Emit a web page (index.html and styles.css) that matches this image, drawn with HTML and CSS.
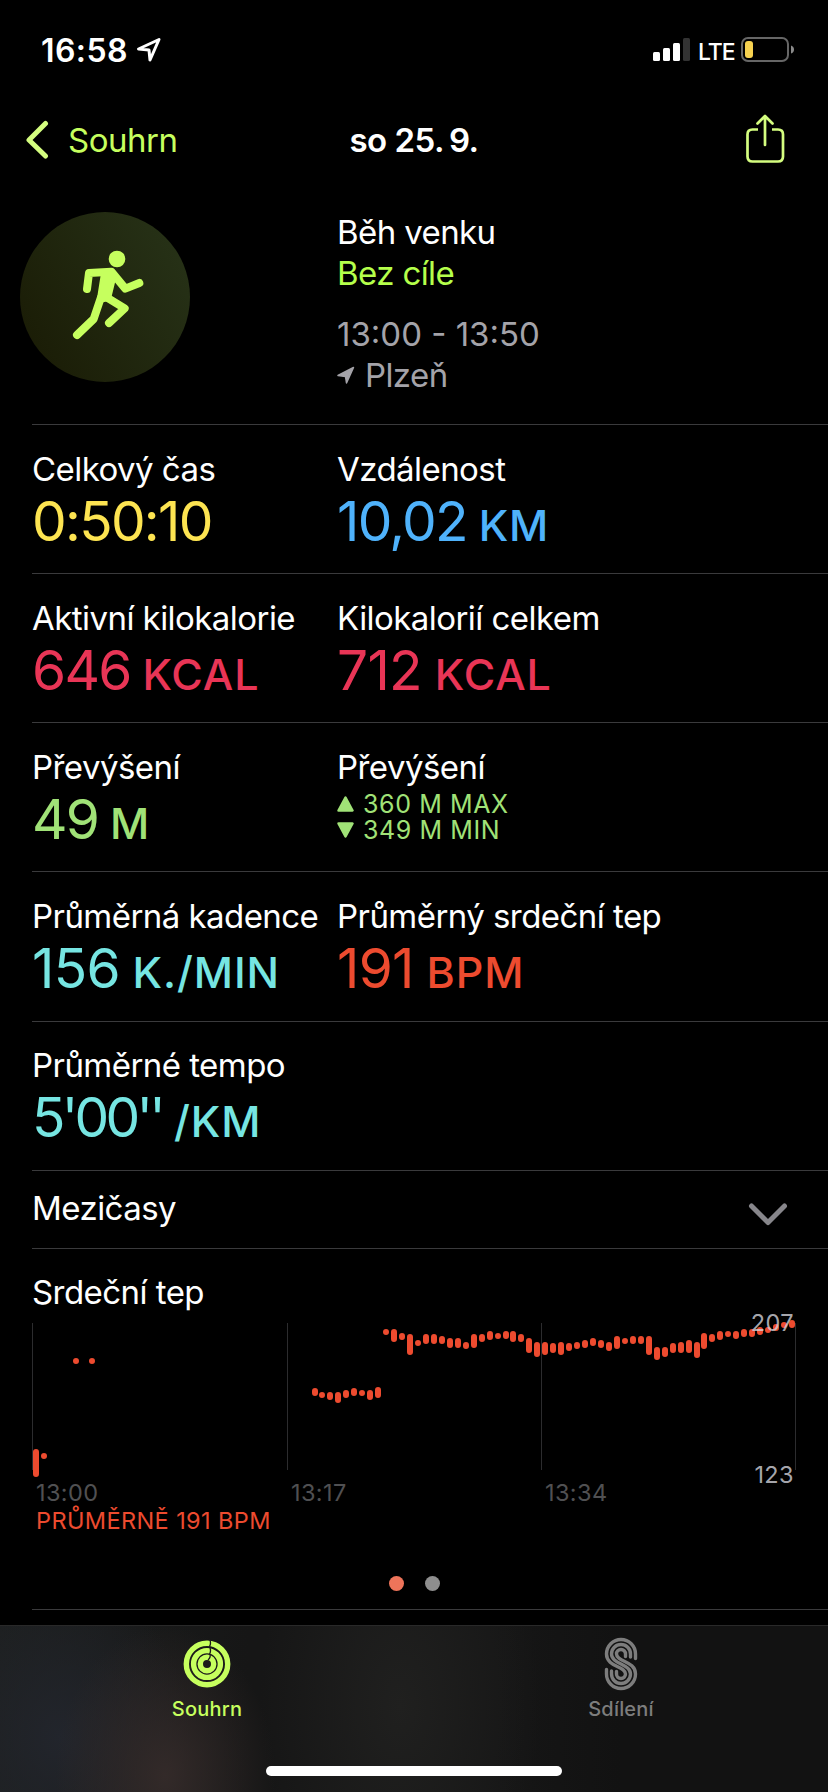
FILE: index.html
```
<!DOCTYPE html>
<html lang="cs">
	<head>
		<meta charset="UTF-8">
		<title>Souhrn</title>
		<link rel="stylesheet" href="styles.css">
	</head>
	<body>
		<div id="app">
			<header class="status">
				<span class="clock">16:58</span>
				<svg class="loc" width="26" height="26" viewBox="0 0 26 26"><path d="M2.5 12 23 2.5 14 23 13 13Z" fill="none" stroke="#fff" stroke-width="3" stroke-linejoin="round"/></svg>
				<svg class="signal" width="38" height="24" viewBox="0 0 38 24" fill="#fff">
					<rect x="0" y="14" width="7" height="9" rx="1.5"/>
					<rect x="10" y="10" width="7" height="13" rx="1.5"/>
					<rect x="20" y="5" width="7" height="18" rx="1.5"/>
					<rect x="30" y="0" width="7" height="23" rx="1.5" fill="#333"/>
				</svg>
				<span class="net">LTE</span>
				<svg class="battery" width="54" height="26" viewBox="0 0 54 26">
					<rect x="1" y="1" width="46" height="23" rx="6" fill="none" stroke="#666" stroke-width="2"/>
					<rect x="4" y="4" width="8" height="17" rx="3" fill="#f7d250"/>
					<path d="M50 8.500Q53 9.500 53 12.500T50 16.500Z" fill="#8a8a8a"/>
				</svg>
			</header>
			<nav class="topnav">
				<a class="back" href="#">
					<svg width="24" height="40" viewBox="0 0 24 40"><path d="M19.500 3.500 3 20 19.500 36" fill="none" stroke="#d4fd7f" stroke-width="5" stroke-linecap="round" stroke-linejoin="round"/></svg>
					<span>Souhrn</span>
				</a>
				<h1>so 25.&#8201;9.</h1>
				<a class="share" href="#">
					<svg width="40" height="50" viewBox="0 0 40 50" fill="none" stroke="#d4fd7f" stroke-width="2.700" stroke-linecap="round" stroke-linejoin="round"><path d="M13 15.500H7.500Q2.500 15.500 2.500 20.500V42.500Q2.500 47.500 7.500 47.500H33Q38 47.500 38 42.500V20.500Q38 15.500 33 15.500H27" stroke-linecap="butt"/><path d="M20 31V2M12.500 9.500 20 2 27.500 9.500"/></svg>
				</a>
			</nav>

			<main>
				<section class="workout">
					<div class="badge">
						<svg width="170" height="170" viewBox="60 66 510 510">
							<g fill="none" stroke="#c6ff5e" stroke-width="24" stroke-linecap="round" stroke-linejoin="round">
								<path d="M261 297 267 249 334 245 376 296 418 279"/>
								<path d="M325 325 374 355 327 399"/>
								<path d="M303 322 281 387 231 435"/>
								<path d="M314 256 338 256 322 322 303 326Z" fill="#c6ff5e"/>
							</g>
							<circle cx="351" cy="207" r="25" fill="#c6ff5e"/>
						</svg>
					</div>
					<div class="info">
						<p>Běh venku</p>
						<p class="goal">Bez cíle</p>
						<p class="time">13:00 - 13:50</p>
						<p class="place"><svg width="18" height="19" viewBox="0 0 18 19"><path d="M1 9.500 16.500 1.500 9.500 17 8.500 10.500Z" fill="#a4a3a9" stroke="#a4a3a9" stroke-width="1.500" stroke-linejoin="round"/></svg><span>Plzeň</span></p>
					</div>
				</section>

				<section class="row">
					<div class="cell">
						<h2>Celkový čas</h2>
						<p class="value yellow">0:50:10</p>
					</div>
					<div class="cell">
						<h2>Vzdálenost</h2>
						<p class="value blue">10,02 <small>KM</small></p>
					</div>
				</section>
				<section class="row">
					<div class="cell">
						<h2>Aktivní kilokalorie</h2>
						<p class="value red">646 <small>KCAL</small></p>
					</div>
					<div class="cell">
						<h2>Kilokalorií celkem</h2>
						<p class="value red loose">712 <small>KCAL</small></p>
					</div>
				</section>
				<section class="row">
					<div class="cell">
						<h2>Převýšení</h2>
						<p class="value green">49 <small>M</small></p>
					</div>
					<div class="cell">
						<h2>Převýšení</h2>
						<div class="elevs">
							<p class="elev"><svg width="17" height="18" viewBox="0 0 17 18"><path d="M8.500 2.500 15.500 15.500H1.500Z"/></svg>360 M MAX</p>
							<p class="elev"><svg width="17" height="18" viewBox="0 0 17 18"><path d="M8.500 15.500 15.500 2.500H1.500Z"/></svg>349 M MIN</p>
						</div>
					</div>
				</section>
				<section class="row tall">
					<div class="cell">
						<h2>Průměrná kadence</h2>
						<p class="value cyan loose">156 <small>K./MIN</small></p>
					</div>
					<div class="cell">
						<h2>Průměrný srdeční tep</h2>
						<p class="value orange loose">191 <small>BPM</small></p>
					</div>
				</section>
				<section class="row last">
					<div class="cell">
						<h2>Průměrné tempo</h2>
						<p class="value cyan pace">5'00'' <small>/KM</small></p>
					</div>
				</section>

				<section class="splits">
					<h2>Mezičasy</h2>
					<svg width="40" height="24" viewBox="0 0 40 24"><path d="M3.500 3 20 19.500 36.500 3" fill="none" stroke="#87868b" stroke-width="5" stroke-linecap="round" stroke-linejoin="round"/></svg>
				</section>

				<section class="heart">
					<h2>Srdeční tep</h2>
					<svg class="chart" width="796" height="238" viewBox="32 1302 796 238">
						<path d="M32.500 1323V1470M287.500 1323V1470M541.500 1323V1470M795.500 1323V1470" stroke="#2c2c2e" stroke-width="1"/>
						<path class="bars" d="M36 1452V1474M44 1456v.01M76 1361v.01M92 1361v.01
							M315 1391V1393M322 1395v.01M330 1395V1397M338 1395V1400M346 1393V1395M354 1391V1393M362 1393v.01M370 1393V1397M378 1390V1395
							M386 1332v.01M394 1332V1339M402 1336V1337M410 1337V1352M418 1343v.01M426 1337V1341M434 1337V1341M442 1339V1341M450 1341V1345
							M458 1341V1345M466 1345V1346M474 1337V1345M482 1337V1339M490 1334V1337M498 1336v.01M506 1334V1336M513 1334V1339M521 1337V1339
							M529 1341V1350M537 1345V1354M545 1345V1352M553 1346V1350M561 1345V1352M569 1346V1348M577 1345V1346M585 1343V1345M593 1341V1343
							M601 1343V1345M609 1345V1348M617 1339V1346M625 1341v.01M633 1339V1341M641 1339V1341M649 1339V1352M657 1350V1357M665 1350V1354
							M673 1346V1350M681 1345V1350M689 1343V1350M697 1345V1355M704 1336V1346M712 1337V1339M720 1334V1337M728 1334v.01M736 1334V1336
							M744 1332V1334M752 1332V1334M760 1330V1332M768 1330v.01M776 1327V1328M784 1325v.01M792 1323V1325"/>
						<g class="range">
							<text x="794" y="1331">207</text>
							<text x="794" y="1483">123</text>
						</g>
						<g class="axis">
							<text x="36" y="1501">13:00</text>
							<text x="291" y="1501">13:17</text>
							<text x="545" y="1501">13:34</text>
						</g>
						<text class="avg" x="36" y="1529">PRŮMĚRNĚ 191 BPM</text>
					</svg>
					<div class="dots"><i class="on"></i><i></i></div>
				</section>
			</main>

			<footer class="tabbar">
				<a class="tab active" href="#">
					<svg width="56" height="56" viewBox="-28 -28 56 56">
						<g fill="none" stroke="#c6ff5e" stroke-width="5.400">
							<circle r="20.700"/>
							<circle r="13.400"/>
							<circle r="6.700"/>
						</g>
						<path d="M2.500-25Q4.500-21 2.500-17.500M2.500-17.500Q4.500-13 2.500-10M2.500-11Q4.500-7 1-4" fill="none" stroke="#1b1b1a" stroke-width="1.300"/>
					</svg>
					<span>Souhrn</span>
				</a>
				<a class="tab" href="#">
					<svg width="56" height="56" viewBox="592 1635 56 56">
						<g fill="none" stroke="#7d7d7d" stroke-width="3.400" stroke-linecap="round">
							<path d="M634.500 1657.500V1653A14.500 14.500 0 0 0 605.500 1653C605.500 1666 624.500 1665 624.500 1673A4.500 4.500 0 0 1 615.500 1673V1670.500"/>
							<path d="M629.500 1656V1653A9.500 9.500 0 0 0 610.500 1653C610.500 1663 629.500 1663 629.500 1673A9.500 9.500 0 0 1 610.500 1673V1670"/>
							<path d="M624.500 1655.500V1653A4.500 4.500 0 0 0 615.500 1653C615.500 1661 634.500 1660 634.500 1673A14.500 14.500 0 0 1 605.500 1673V1668.500"/>
						</g>
					</svg>
					<span>Sdílení</span>
				</a>
				<div class="home"></div>
			</footer>
		</div>
	</body>
</html>
```
FILE: styles.css
```
* {
	margin: 0;
	padding: 0;
	box-sizing: border-box;
}
body {
	background-color: #000;
	color: #fff;
	font-family: Inter, "Liberation Sans", sans-serif;
	font-size: 33px;
}
a {
	color: inherit;
	text-decoration: none;
}
svg {
	display: block;
	flex: none;
}
#app {
	width: 828px;
	height: 1792px;
	overflow: hidden;
	display: flex;
	flex-direction: column;
}

/* status bar */
.status {
	height: 100px;
	padding: 0 33px 0 41px;
	display: flex;
	align-items: center;
}
.clock {
	font-size: 32px;
	font-weight: 600;
	letter-spacing: 0.4px;
	width: 95px;
}
.signal {
	margin-left: auto;
}
.net {
	font-size: 23px;
	font-weight: 500;
	letter-spacing: -1px;
	line-height: 30px;
	margin: 3px 8px 0 7px;
	width: 35px;
}

/* navigation */
.topnav {
	height: 80px;
	padding: 0 43px 0 26px;
	display: grid;
	grid-template-columns: 240px 1fr 223px;
	align-items: center;
}
.back {
	display: flex;
	align-items: center;
	gap: 18px;
	color: #c6ff5e;
	letter-spacing: -0.5px;
}
h1 {
	font-size: 33px;
	font-weight: 600;
	letter-spacing: -0.5px;
	text-align: center;
}
.share {
	justify-self: end;
	margin-top: -2px;
}

/* workout head */
main {
	height: 1445px;
}
.workout {
	height: 244px;
	display: grid;
	grid-template-columns: 317px 1fr;
	padding: 32px 0 0 20px;
}
.badge {
	width: 170px;
	height: 170px;
	border-radius: 50%;
	background: linear-gradient(60deg, #191a04, #283419);
}
.info {
	line-height: 41px;
	letter-spacing: -0.6px;
}
.goal {
	color: #b5ff4b;
}
.time {
	margin-top: 20px;
	letter-spacing: 0;
	color: #a4a3a9;
}
.place {
	display: flex;
	align-items: center;
	gap: 10px;
	color: #a4a3a9;
}

/* metrics */
.row {
	height: 149px;
	margin-left: 32px;
	padding-top: 24px;
	border-top: 1px solid #3a3a3c;
	display: grid;
	grid-template-columns: 305px 1fr;
}
.tall {
	height: 150px;
}
.last {
	padding-top: 23px;
}
h2 {
	font-size: 33px;
	font-weight: 400;
	line-height: 40px;
	letter-spacing: -0.55px;
	white-space: nowrap;
}
.value {
	font-size: 55px;
	line-height: 64px;
	letter-spacing: -1.7px;
	word-spacing: -2px;
	white-space: nowrap;
}
.value small {
	font-size: 43px;
	font-weight: 500;
	letter-spacing: 0.9px;
}
.loose {
	letter-spacing: -0.7px;
}
.pace {
	letter-spacing: -3.7px;
	word-spacing: 0;
}
.yellow { color: #fde451; }
.blue { color: #4fb2fb; }
.red { color: #e93556; }
.green { color: #a0e277; }
.cyan { color: #76e5e2; }
.orange { color: #ed4b2f; }
.elevs {
	padding-top: 4px;
}
.elev {
	display: flex;
	align-items: center;
	gap: 9px;
	font-size: 25px;
	line-height: 26px;
	letter-spacing: 0.6px;
	color: #a0e277;
}
.elev svg {
	fill: #a0e277;
	stroke: #a0e277;
	stroke-width: 2.5;
	stroke-linejoin: round;
}

.splits {
	height: 78px;
	margin-left: 32px;
	padding: 0 40px 3px 0;
	border-top: 1px solid #3a3a3c;
	display: flex;
	align-items: center;
	justify-content: space-between;
}
.splits svg {
	margin-top: 13px;
}

/* heart rate */
.heart {
	height: 361px;
	margin-left: 32px;
	padding-top: 23px;
	border-top: 1px solid #3a3a3c;
}
.chart {
	margin-top: -10px;
}
.bars {
	fill: none;
	stroke: #ed4b2f;
	stroke-width: 6;
	stroke-linecap: round;
}
.chart text {
	font-size: 23.5px;
	letter-spacing: 0.4px;
}
.range {
	fill: #d4d4dc;
	fill-opacity: .8;
	text-anchor: end;
}
.axis {
	fill: #505052;
}
.avg {
	fill: #ed4b2f;
}
.dots {
	display: flex;
	justify-content: center;
	gap: 21px;
	margin: 36px 31px 0 0;
}
.dots i {
	width: 15px;
	height: 15px;
	border-radius: 50%;
	background-color: #8e8e8e;
}
.dots .on {
	background-color: #ee745a;
}
.heart::after {
	content: "";
	display: block;
	margin-top: 18px;
	border-top: 1px solid #3a3a3c;
}

/* tab bar */
.tabbar {
	height: 167px;
	border-top: 1px solid #292929;
	background:
		radial-gradient(ellipse 110px 150px at 165px 150px, #332a29, transparent),
		radial-gradient(ellipse 130px 160px at 60px 110px, #22252c, transparent),
		radial-gradient(ellipse 140px 240px at 400px 80px, #20201f, transparent),
		linear-gradient(90deg, #1d1f1f, #161616 30%, #161616 60%, #121212 75%);
	display: grid;
	grid-template-columns: 1fr 1fr;
	grid-template-rows: 140px 10px;
}
.tab {
	display: flex;
	flex-direction: column;
	align-items: center;
	padding-top: 10px;
	font-size: 20px;
	font-weight: 500;
	line-height: 24px;
	color: #7d7d7d;
}
.tab span {
	margin-top: 5px;
	letter-spacing: 0.2px;
}
.active {
	color: #c6ff5e;
}
.home {
	grid-column: 1 / 3;
	justify-self: center;
	width: 296px;
	height: 10px;
	border-radius: 5px;
	background-color: #fff;
}
```
